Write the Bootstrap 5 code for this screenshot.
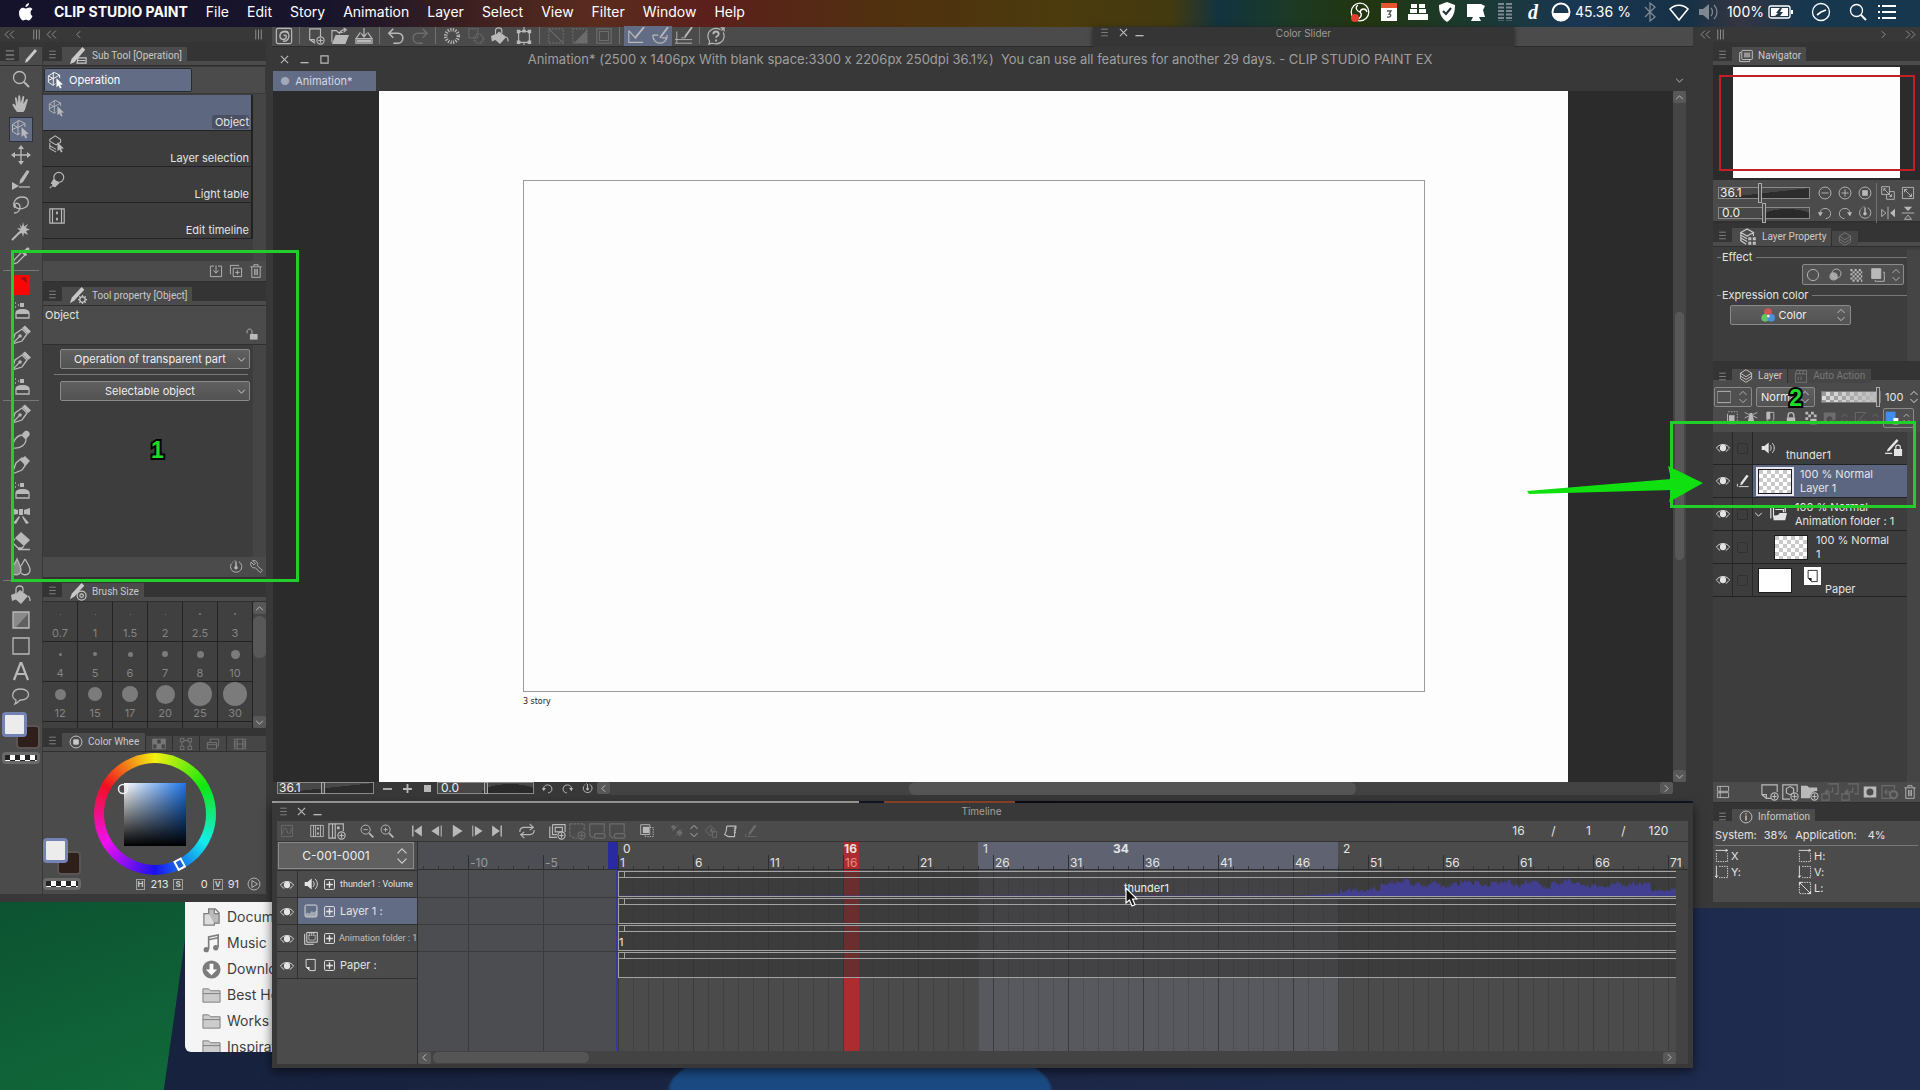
<!DOCTYPE html>
<html lang="en">
<head>
<meta charset="utf-8">
<meta name="viewport" content="width=device-width, initial-scale=1">
<title>CLIP STUDIO PAINT</title>
<link href="https://cdn.jsdelivr.net/npm/bootstrap@5.3.0/dist/css/bootstrap.min.css" rel="stylesheet">
<style>
:root{--face:#4b4b4b;--frame:#383838;--well:#3d3d3d;--deep:#2b2b2b;--sel:#636c85;--ink:#e4e4e4;--glyph:#b9b9b9;--edge:#2f2f2f}
body{min-height:100vh;font-family:Inter,"Liberation Sans",sans-serif;font-feature-settings:"calt" 0;font-size:11px;line-height:14px;color:var(--ink);background:#1f2b4e;overflow:hidden}
.desk{min-height:100vh;background:
 radial-gradient(ellipse 210px 60px at 860px 100%,#1b4a82 90%,transparent 92%),
 linear-gradient(90deg,#16213c,#1c2747 50%,#1f2c50)}
.turf{left:0;bottom:0;width:195px;height:230px;background:linear-gradient(160deg,#0b4f30,#116a3a);clip-path:polygon(0 0,100% 0,94% 40%,84% 100%,0 100%)}
svg.i{width:18px;height:18px;fill:none;stroke:currentColor;stroke-width:1.3;flex:none;display:block}
svg.s{width:14px;height:14px}
svg.xs{width:11px;height:11px;stroke-width:1.8}
.f{fill:currentColor;stroke:none}
.ib{display:flex;align-items:center;justify-content:center;padding:0;border:0;border-radius:0;color:var(--glyph);background:none;width:20px;height:20px;flex:none}
.ib:hover{color:#fff}
.off{color:#6c6c6c}
/* menu bar */
.menus{height:27px;padding-bottom:4px;background:linear-gradient(90deg,#15132b 0,#17142b 17%,#3a1f20 24%,#5a2c1e 31%,#5c1f1c 37%,#50300f 46%,#4c3b0d 55%,#433a10 61%,#12333f 63.5%,#1b3a26 67%,#22350f 71%,#1c3a2c 76%,#193653 82%,#163145 88%,#353541 90.5%,#17374f 94%,#17374f 100%);font-size:14px;line-height:20px;color:#fff}
.menus a{color:#fff;text-decoration:none}
.menus .ib{color:#fff;width:auto}
.menus svg.i{width:20px;height:20px}
.menus .off{color:#7f8890}
.menus svg.batt{width:26px}
.menu-items{gap:18px;margin-left:14px}
.status-items{gap:9px;padding-right:23px}
.dd{font-family:"Liberation Serif",serif;font-size:20px;padding:0 4px}
/* docks */
.dock{background:var(--frame);position:relative;z-index:2}
.ldock{width:272px;margin-bottom:188px;padding-bottom:8px}
.rdock{width:227px;margin-bottom:182px;padding-bottom:6px;padding-left:20px}
.strip{height:15px;color:#8e8e8e}
.rstrip{margin-left:-13px}
.tabs{height:24px;padding-top:5px;flex:none;background:linear-gradient(#343434 19px,var(--face) 19px,var(--face) 23px,var(--edge) 23px)}
.burger.ib{width:19px;height:15px;color:#7e7e7e}
.ptab{height:18px;padding:0 5px 0 7px;gap:5px;background:var(--face);border:0;color:#c9c9c9;font-family:Roboto,"Liberation Sans",sans-serif;font-size:10px;line-height:18px;white-space:nowrap;overflow:hidden;display:flex;align-items:center}
.ptab.idle{color:#777;border-left:1px solid var(--edge);background:#464646;padding:0 6px;height:15px;align-self:flex-end;margin-bottom:1px}
.foot{height:21px;flex:none;background:var(--face);border-bottom:1px solid var(--edge)}
.well{background:var(--well)}
.gutter{width:13px;background:#454545;flex:none}
/* tool strip */
.tools{width:42px;background:var(--face);padding-bottom:185px;position:relative}
.tools .ib{flex:1 1 0;width:24px;height:auto;margin:0 auto 0 9px}
.tools .burger.ib{flex:none;width:19px;height:15px;margin:0}
.tools .ib.on{background:var(--sel);outline:1px solid #2c3140;outline-offset:-1px}
.tools hr,.rule{margin:1px 3px;border:0;border-top:1px solid #777;opacity:1}
.tools svg.i{width:20px;height:20px}
.tools .tabs svg.i{width:14px;height:14px}
.swatch{width:38px;height:52px;position:relative;flex:none}
.swatch i{position:absolute;border-radius:4px;box-sizing:border-box}
.swatch .fg{left:0;top:0;width:25px;height:25px;background:#ececec;border:3px solid #7482b4;z-index:1}
.swatch .bgc{right:0;top:13px;width:24px;height:24px;background:#2f1f1b;border:2px solid #5a5553}
.swatch .tr{left:0;bottom:0;width:38px;height:12px;border:3px solid #6a6a6a;background:conic-gradient(#fff 25%,#222 0 50%,#fff 0 75%,#222 0) 0 0/10px 10px}
.toolsw{margin:3px auto -55px 2px}
.lpanels{width:223px;margin-left:1px}
.group{height:28px;background:var(--face);border:1px solid #3a3a3a;padding-top:1px}
.group button{width:148px;height:24px;background:var(--sel);border:1px solid #262a33;border-radius:2px;color:#fff;gap:4px;padding:0 2px}
.sublist{padding:1px 0 22px}
.sub{height:36px;border:0;border-bottom:1px solid #222;border-right:2px solid #222;background:var(--well);color:var(--ink);padding:4px 2px 1px 5px}
.sub.on{background:#5d6780}
.sub.on .lbl{background:#4a5062;border-radius:3px;padding-left:3px}
.sub svg{color:var(--glyph)}
.prophead{height:39px;flex:none;background:var(--face);border-bottom:1px solid var(--edge);padding:2px 4px 0 2px}
.propset{padding:4px 3px 0 17px}
.propset .rule{margin:5px 2px 6px -6px}
.drop{background:linear-gradient(#606060,#525252);border:1px solid #8a8a8a;border-radius:2px;color:#eee;font-size:11px;height:20px;padding:0 16px 0 6px;text-align:center;text-align-last:center;appearance:none;width:100%}
.dropwrap{display:grid;align-items:center}
.dropwrap>*{grid-area:1/1}
.dropwrap svg{justify-self:end;margin-right:3px;color:#ccc;pointer-events:none}
.sizes{height:126px;overflow:hidden}
.sizegrid{display:grid;grid-template-columns:repeat(6,1fr);grid-auto-rows:40px;background:#404040}
.sizegrid button{border:0;border-right:1px solid #222;border-bottom:1px solid #222;background:none;color:#858585;padding:0 0 1px;font-size:11px;line-height:14px;display:flex;flex-direction:column;align-items:center;justify-content:flex-end}
.sizegrid i{display:block;border-radius:50%;background:#7b7b7b;flex:none}
.sizegrid u{flex:none;height:24px;display:flex;align-items:center;text-decoration:none}
.sizegrid b{font-weight:400;z-index:1}
.sbtn.ib{width:13px;height:12px;background:#585858;color:#bbb;border-radius:2px}
.thumb{background:#606060;border-radius:6px}
.sthumb{height:42px;margin-top:2px;background:#585858}
.cwt{width:83px}
.colorbody{height:142px;background:var(--face);padding-top:1px}
.wheel{width:122px;height:122px;flex:none;border-radius:50%;background:conic-gradient(#f4f010,#0fe80f 60deg,#14ecec 120deg,#1a10ee 180deg,#f010f0 240deg,#f01020 300deg,#f4f010)}
.wheel .core{width:102px;height:102px;border-radius:50%;background:var(--face)}
.wheel .sq{width:62px;height:63px;background:linear-gradient(transparent,#000),linear-gradient(90deg,#fff,#1c74e8)}
.knobs{left:0;top:0}
.hsv{margin-top:-1px;gap:5px;font-size:11px;padding-right:2px}
.hsv b{font-size:8px;font-weight:700;line-height:9px;border:1px solid #a0a0a0;color:#ccc;padding:0 1px}
.hsv .n0{width:20px;text-align:right}
.cwsw{left:0;top:86px}
/* centre */
.mid{z-index:3;min-width:0}
.bar{height:20px;padding-bottom:2px;background:var(--face);border-bottom:1px solid #2c2c2c}
.bar .ib{width:24px}
.sep{width:1px;background:#717171;margin:0 4px 0 3px;align-self:stretch;flex:none}
.bar .on{background:var(--sel)}
.docwin,.tlwin{background:var(--frame)}
.floatwin{width:421px;height:20px;padding-bottom:9px;align-self:flex-start;background:#353535;color:#9b9b9b;margin-right:179px;box-shadow:0 1px 5px #222;font-size:10px}
.bar .burger.ib{width:22px}
.fwt{padding-right:54px}
.wi.i{width:9px;height:9px;stroke-width:2.6}
.wbtn.ib{width:16px;height:11px}
.wb2.ib{width:18px;height:18px;margin-left:2px}
.title{height:24px;color:#9f9f9f;font-size:13px;line-height:24px;padding-left:1px}
.doctitle{padding-right:66px}
.doctabs{height:20px;padding:0 5px 0 1px}
.doctab{width:103px;height:20px;background:var(--sel);color:#d4d8e4;border:0;text-align:left;padding:0 7px}
.dot{color:#a3a9bb;margin-right:2px}
.docmain{padding:0 7px 0 1px}
.stage{background:var(--deep);padding-left:7.5%;padding-right:7.4%}
.paper{background:#fdfdfd;padding:89px 12.1% 70px}
.frameline{border:1px solid #999ba0}
.note{font:8px/20px "DejaVu Sans","Liberation Sans",sans-serif;color:#222;height:20px}
.vth{height:248px;margin-top:209px;width:9px;align-self:center;background:#585858}
.docfoot{height:19px;padding:0 20px 7px 5px}
.docfoot .ib{height:12px}
.gauge{display:grid;align-items:center;height:12px}
.gauge>*{grid-area:1/1}
.gauge span{pointer-events:none;z-index:1;font-size:12px;line-height:12px;padding-left:2px;color:#eee}
.gauge input,.opac{appearance:none;height:12px;width:100%;margin:0;border:1px solid #8a8a8a;background:linear-gradient(to bottom right,#484848 50%,#2d2d2d 51%)}
.gauge.hill input{background:radial-gradient(ellipse 30% 90% at 76% 100%,#2a2a2a 98%,transparent),#474747}
.gauge input::-webkit-slider-thumb,.opac::-webkit-slider-thumb{appearance:none;width:4px;height:20px;background:#4b4b4b;border:1px solid #aaa;border-radius:0}
.gauge.low input::-webkit-slider-thumb{height:12px}
.g97{width:97px;margin-right:3px}
.dth{margin-left:28.5%;width:42.5%;background:#555}
.edgeline{height:2px;background:linear-gradient(90deg,#a9a9a9 41.3%,#141726 41.3%,#141726 43.1%,#9a4a2c 43.1%,#9a4a2c 52.3%,#0d0e14 52.3%,#11152a)}
/* timeline */
.tlwin{height:265px;margin-bottom:22px;padding:0 5px 4px 5px;box-shadow:0 3px 10px #0009}
.tltitle{height:18px;color:#a0a0a0;font-size:10px;padding-bottom:2px;margin-left:-3px}
.tlt{padding-right:50px}
.tlbar{height:21px;background:var(--face);border-bottom:1px solid #333}
.tlbar i{width:10px}
.nw.ib{width:14px}
.counts{font-size:12px;padding-right:12px}
.counts span{width:35px;text-align:center}
.tlmain{background:#434343;min-width:0}
.tlleft{width:141px;background:var(--face);border-right:1px solid #303030}
.cut{height:27px;width:137px;padding-left:1px}
.cut select{height:27px;background:#606060;padding-right:26px;font-size:12px;border-radius:0}
.trk{height:27px;border-top:1px solid #303030;white-space:nowrap;overflow:hidden}
.trk .eye{width:21px;height:27px;border-right:1px solid #303030;flex:none}
.trk.on .nm{background:var(--sel)}
.trk .nm{padding-left:6px;gap:6px;min-width:0}
.trk .nm span{margin-left:-1px}
.trk .nm .sm{font:9px/14px Roboto,"Liberation Sans",sans-serif}
.trk .nm .fadeout{opacity:.75;margin-left:-2px}
.lastt{border-bottom:1px solid #303030;height:28px}
.tlleft .first{margin-top:1px}
.tlright{min-width:0;overflow:hidden;background:#434343}
.ruler{height:28px;flex:none;overflow:hidden;border-bottom:1px solid #2e2e2e;background:
 linear-gradient(#2929a2,#2929a2) 190px 0/10px 100% no-repeat,
 linear-gradient(#ab2d2f,#ab2d2f) 426px 0/15px 100% no-repeat,
 repeating-linear-gradient(90deg,#2f2f2f 0 1px,transparent 1px 75px) 50px 13px/100% 14px no-repeat,
 repeating-linear-gradient(90deg,#333 0 1px,transparent 1px 15px) 5px 24px/100% 4px no-repeat,
 linear-gradient(90deg,#4d4e53 200px,var(--face) 200px,var(--face) 560px,#5f6371 560px,#5f6371 920px,var(--face) 920px)}
.ruler .sec{padding-left:205px;height:14px;font-size:12px}
.ruler .sec span{width:360px;flex:none;position:relative}
.ruler .fr{padding-left:51px;height:14px;font-size:12px}
.ruler .fr span{width:75px;flex:none;padding-left:1px}
.ruler .neg{color:#999}
.ruler .cur{color:#e58a8a}
.ruler em{position:absolute;font-style:normal;font-weight:700;top:0}
.pos16{left:221px}
.pos34{left:130px}
.lanes{margin-right:12px;background:
 linear-gradient(#ab2d2f,#ab2d2f) 426px 0/15px 100% no-repeat,
 linear-gradient(#3a35a0,#3a35a0) 198px 0/2px 100% no-repeat,
 repeating-linear-gradient(90deg,#3a3b3d 0 1px,transparent 1px 75px) 50px 0/100% 100% no-repeat,
 repeating-linear-gradient(90deg,#0002 0 1px,transparent 1px 15px) 200px 0/100% 100% no-repeat,
 linear-gradient(90deg,#4c4d50 200px,var(--face) 200px,var(--face) 560px,#58595f 560px,#58595f 920px,var(--face) 920px)}
.lane{height:27px;border-top:1px solid #3b3b3b;padding-left:200px}
.lane:first-child{border-top-color:transparent}
.clip{height:26px;border:1px solid #a3a3a3;border-right:0;background:#2d2d2d80;color:#eee;position:relative}
.clip::before{content:"";display:block;height:6px;border-bottom:1px solid #a3a3a3;background:linear-gradient(90deg,transparent 5px,#a3a3a3 5px,#a3a3a3 6px,transparent 6px)}
.clip svg{display:block;position:absolute;right:0;bottom:0;width:100%;height:18px}
.clip .tag{position:absolute;left:505px;top:9px}
.one{left:0;top:9px}
.hsb{height:13px;background:#434343}
.tth{width:156px;height:11px;margin-left:2px;background:#555}
.tlr{margin-right:12px}
/* right */
.nav{height:114px;flex:none;background:var(--deep);padding:1px 20px 2px}
.nav .pg{background:#fdfdfd}
.nav .view{left:6px;right:5px;top:9px;bottom:9px;border:2px solid #c22026}
.navctl{height:43px;background:var(--face);border-bottom:2px solid #303030;padding:3px 0 0 5px}
.navctl .gauge{width:92px;margin-right:5px;flex:none}
.navctl .sep{margin:0 1px}
.lprop{height:114px;padding-top:3px}
.legend{display:flex;align-items:center;gap:4px;line-height:14px;padding-left:4px}
.legend::before{content:"";width:4px;margin-right:-3px;border-top:1px solid #777}
.legend::after{content:"";flex:1;border-top:1px solid #777}
.boxed{border:1px solid #8a8a8a;border-radius:2px;background:#505050}
.fx{width:102px;height:21px;margin:0 3px 3px}
.exprs{width:121px;margin:3px 0 0 17px}
.exprs svg.rgbi{justify-self:start;margin-left:31px}
.exprs select{padding-left:20px}
.ltabs{height:22px;background:linear-gradient(#343434 19px,var(--face) 19px);padding-top:8px}
.ltabs .ptab{height:14px}
.ltabs .ptab.idle{margin-bottom:0}
.itabs{height:22px;padding-top:6px;background:linear-gradient(#343434 18px,var(--face) 18px)}
.itabs .ptab{height:16px}
.layctl{height:49px;background:var(--face)}
.lc1{height:24px;padding:3px 2px 0 1px;gap:4px}
.b1.ib{width:38px;gap:5px}
.blend{width:59px;flex:none}
.blend .drop{text-align:left;text-align-last:left;padding-left:4px}
.opac{background:linear-gradient(90deg,transparent,#bbb),conic-gradient(#ddd 25%,#999 0 50%,#ddd 0 75%,#999 0) 0 0/8px 8px;border-color:#777;width:60px;flex:none;margin-left:2px}
.hund{font-size:11px}
.lc2{padding-left:8px;height:20px;margin-top:1px}
.lc2 .wd.ib{width:31px;gap:2px}
.lrow{height:33px;border-bottom:1px solid #232323;line-height:14px;white-space:nowrap}
.lrow .c{width:20px;border-right:1px solid #272727;height:32px;display:flex;align-items:center;justify-content:center;flex:none}
.lrow .box{width:11px;height:11px;border:1px solid #303030;border-radius:2px}
.lrow.on .body{background:#5c6680}
.lrow .body{min-width:0}
.checker{width:34px;height:25px;border:1px solid #1c1c1c;background:conic-gradient(#fff 25%,#c9c9c9 0 50%,#fff 0 75%,#c9c9c9 0) 0 0/8px 8px;flex:none}
.checker.plain{background:#fff}
.lrow.on .checker{outline:2px solid #e8e8f4}
.tname{margin-left:11px;padding-bottom:2px}
.t1{margin-left:5px}
.t2{margin-left:21px}
.tx{margin-left:8px}
.dnn{margin:0 5px 0 0}
.pgico{background:#fff;color:#222;margin-left:12px;width:17px;height:18px;padding:2px;align-self:flex-start;margin-top:3px}
.info{height:77px;background:var(--face);padding:3px 2px 0;font-size:11px}
.sysline{display:flex;gap:7px}
.sysline span:last-child{margin-left:4px}
.info .rule{margin:3px 0 2px}
.coords{display:grid;grid-template-columns:83px 1fr;grid-auto-rows:16px}
.coords span{display:flex;gap:2px;align-items:center}
/* finder */
.finder{left:185px;bottom:38px;width:140px;height:160px;background:#f5f5f5;border-radius:0 0 6px 6px;z-index:1;overflow:hidden;color:#3f3f3f;font-size:14px;line-height:26px;padding:12px 0 0 17px}
.finder a{color:inherit;text-decoration:none;gap:6px;height:26px;white-space:nowrap}
.finder svg.i{color:#7c7c7c;width:19px;height:19px}
/* callouts */
.callbox{border:3px solid #22cf28;z-index:9;pointer-events:none}
.m1{left:11px;top:250px;width:288px;height:332px}
.m2{right:4px;top:421px;width:246px;height:87px}
.arr{right:217px;top:466px;width:176px;height:38px;z-index:9}
.num{z-index:9;font:700 23px/26px "Liberation Sans",sans-serif;color:#1fdc28;-webkit-text-stroke:4px #000;paint-order:stroke fill}
.n1{left:151px;top:437px}
.n2{right:118px;top:385px}
.cursor{left:1125px;top:887px;width:13px;height:20px;z-index:9}
</style>
</head>
<body>
<svg width="0" height="0" class="position-absolute" aria-hidden="true"><defs>
<symbol id="burger" viewBox="0 0 20 20"><path d="M4 4h12M4 10h12M4 16h12"/></symbol>
<symbol id="x" viewBox="0 0 20 20"><path d="M2 2l16 16M18 2L2 18"/></symbol>
<symbol id="min" viewBox="0 0 20 20"><path d="M1 17h18" stroke-width="3"/></symbol>
<symbol id="sqr" viewBox="0 0 20 20"><path d="M2 2h16v16H2z"/></symbol>
<symbol id="up" viewBox="0 0 20 20"><path d="M4 13l6-6 6 6"/></symbol>
<symbol id="dn" viewBox="0 0 20 20"><path d="M4 7l6 6 6-6"/></symbol>
<symbol id="lt" viewBox="0 0 20 20"><path d="M13 4l-6 6 6 6"/></symbol>
<symbol id="rt" viewBox="0 0 20 20"><path d="M7 4l6 6-6 6"/></symbol>
<symbol id="ltt" viewBox="0 0 20 20"><path d="M9 3L2 10l7 7M18 3l-7 7 7 7"/></symbol>
<symbol id="rtt" viewBox="0 0 20 20"><path d="M2 3l7 7-7 7M11 3l7 7-7 7"/></symbol>
<symbol id="grip" viewBox="0 0 20 20"><path d="M5 1v18M10 1v18M15 1v18"/></symbol>
<symbol id="ud" viewBox="0 0 20 20"><path d="M5 7l5-5 5 5M5 13l5 5 5-5"/></symbol>
<symbol id="apple" viewBox="0 0 20 20"><path class="f" d="M13 1c.2 2-1.600 4-3.500 4C9.300 3 11.200 1.200 13 1zM16.500 14c-.8 2-2.200 4.500-3.900 4.500-1.100 0-1.500-.7-2.700-.7s-1.700.7-2.700.7C5.200 18.500 3 14.500 3 11c0-3.300 2-5.300 4.200-5.300 1.200 0 2 .8 3 .8s1.800-.9 3.300-.9c1.200 0 2.300.6 3 1.600-2.700 1.600-2.300 5.500 0 6.800z"/></symbol>
<symbol id="mag" viewBox="0 0 20 20"><circle cx="8.500" cy="8.500" r="6"/><path d="M13 13l5 5" stroke-width="2"/></symbol>
<symbol id="hand" viewBox="0 0 20 20"><path class="f" d="M6 18C4 15 1 11 1.500 10c1-.8 2.500.5 3.500 2L4 4.500C4 3 5.500 3 5.800 4.300L7 9l.3-6.800c.1-1.400 1.700-1.400 1.900 0L9.700 9l1.800-6.200c.5-1.300 1.900-.9 1.700.5L12.300 10l2.800-4.500c.8-1 2-.4 1.600.9L14.800 13c-.5 2-1 3.500-2.300 5z"/></symbol>
<symbol id="cube" viewBox="0 0 20 20"><path d="M9 14l-2 2-5.500-3.500v-7L8 1.500l6 3V8M1.500 5.500L7 8.500l7-4M7 8.500v7M7 1.500v7M1.500 10.500L7 8" stroke-width="1"/><path class="f" d="M10.500 8v10l2.300-2 1.700 3.500 1.700-.8-1.700-3.400 3.200-.3z"/></symbol>
<symbol id="move" viewBox="0 0 20 20"><path d="M10 3v14M3 10h14"/><path class="f" d="M10 0l3 4H7zM10 20l3-4H7zM0 10l4-3v6zM20 10l-4-3v6z"/></symbol>
<symbol id="mvl" viewBox="0 0 20 20"><path class="f" d="M16 0l2.500 1.500L12 12l-3.500 2 .5-4zM1 12l7 4-7 4z"/><path d="M8 17h11"/></symbol>
<symbol id="lasso" viewBox="0 0 20 20"><path d="M4 13C1 9 4 2 11 2c8 0 8 9 2 11-5 2-9 0-9-3s5-2 5 2-3 6-6 6"/></symbol>
<symbol id="wand" viewBox="0 0 20 20"><path d="M1 19l9-9" stroke-width="2"/><path class="f" d="M12 1l1.200 4.500L17 3l-2.200 4L19 8.500 15 10l2 4-4-2-1 4-1-4-4 1 2.500-3L6 7l4 .5L8.500 3 11 6z"/></symbol>
<symbol id="drop" viewBox="0 0 20 20"><path d="M2 18l1-4 8-8 3 3-8 8z"/><path class="f" d="M10 5l1.200-1.200 1.300 1.300L15.500 2c2-1.500 4 .8 2.500 2.500L15 7.500l1.200 1.200L15 10z"/></symbol>
<symbol id="red" viewBox="0 0 20 20"><path d="M1 0h18v20H1z" fill="#fb0506" stroke="none"/><path d="M9 3l7 5-1-6z" fill="#a01010" stroke="none"/></symbol>
<symbol id="air" viewBox="0 0 20 20"><path d="M5 18v-5c0-4 13-4 13 0v5z"/><path class="f" d="M5 14v-2c1-4 12-4 13 0v2zM9 3h4v4H9z"/><path d="M1 2h1M4 3h1M1 6h1M4 7h1M7 5h1" stroke-width="1.500"/></symbol>
<symbol id="pen" viewBox="0 0 20 20"><path d="M1 19L4 9l7-5 5 5-5 7zM1 19l7-7"/><circle class="f" cx="9" cy="11" r="1.800"/><path class="f" d="M11 3l3-2.500 6 6L17 9z"/></symbol>
<symbol id="brush" viewBox="0 0 20 20"><path d="M2 18C1 12 5 6 11 5l4 4c0 6-6 10-13 9z"/><path class="f" d="M11 4l3-3c3-1 6 2 4 5l-3 3z"/></symbol>
<symbol id="pencil" viewBox="0 0 20 20"><path d="M1 19l4-11 6-5 5 5-5 7z"/><path class="f" d="M9 5l5-4 5 5-5 5-2-3z"/></symbol>
<symbol id="bow" viewBox="0 0 20 20"><path class="f" d="M8 3h4v6H8zM7 4L1 2v7l6-1zM13 4l6-2v7l-6-1zM8 10L2 17l3 1 4-7zM12 10l6 7-3 1-4-7z"/></symbol>
<symbol id="eraser" viewBox="0 0 20 20"><path class="f" d="M10 1l9 8-6 6-9-8z"/><path d="M4 8l-3 3 6 6h4l2-2M7 18.500h12"/></symbol>
<symbol id="blend" viewBox="0 0 20 20"><path d="M6 2c-2 5-5 7-5 11 0 7 9 6 9 0 0-4-2-6-4-11z" fill="#8a8a8a"/><path d="M14 2c2 4 5 7 5 11 0 5-6 6-9 3M14 2l-4 7"/></symbol>
<symbol id="bucket" viewBox="0 0 20 20"><path class="f" d="M9 5l8 6-7 8-8-7z"/><path d="M5 9V4c0-4 7-4 7 0v3M17 11c2 1 2 3 2 5"/><path class="f" d="M0 10l5-2 1 6-5 2z"/></symbol>
<symbol id="grad" viewBox="0 0 20 20"><path d="M2 2h16v16H2z" fill="#8a8a8a"/><path d="M17 4v13H5z" fill="#606060" stroke="none"/></symbol>
<symbol id="rect" viewBox="0 0 20 20"><path d="M2 2h16v16H2z"/></symbol>
<symbol id="txt" viewBox="0 0 20 20"><path d="M3 19L9.500 2h1L17 19M6 13h8.500" stroke-width="2.200"/></symbol>
<symbol id="balloon" viewBox="0 0 20 20"><path d="M5 14C0 12 0 3 10 3s10 11 0 11c-2 0-2 2-6 4 1-2 1-3 1-4z"/></symbol>
<symbol id="penlist" viewBox="0 0 20 20"><path class="f" d="M15 0l3 3L6 17l-5 2 2-6z"/><path d="M10 12h9v6H9zM10 15h8"/></symbol>
<symbol id="pengear" viewBox="0 0 20 20"><path class="f" d="M14 0l3 3L6 15l-5 3 2-6z"/><circle cx="15" cy="14" r="3"/><path d="M15 9v2M15 17v2M10 14h2M18 14h2M11.500 10.500l1.500 1.500M17 16l1.500 1.500M18.500 10.500L17 12M13 16l-1.500 1.500"/></symbol>
<symbol id="pendisc" viewBox="0 0 20 20"><path class="f" d="M14 0l3 3L6 15l-5 3 2-6z"/><circle cx="14" cy="14" r="5"/><circle cx="14" cy="14" r="2"/></symbol>
<symbol id="laysel" viewBox="0 0 20 20"><path d="M2 5l6-4 6 4v3l-5 3-7-4zM2 9v3l7 4M2 12v3l7 4" stroke-width="1.200"/><path class="f" d="M10.500 8v10l2.300-2 1.700 3.500 1.700-.8-1.700-3.400 3.200-.3z"/></symbol>
<symbol id="bulb" viewBox="0 0 20 20"><circle cx="12" cy="7" r="5.500"/><path class="f" d="M6 9l7 4-5 5-4-1 1-2-2-1z"/><path d="M2 19l2-2"/></symbol>
<symbol id="edtl" viewBox="0 0 20 20"><path d="M2 2h16v16H2zM5 2v16M15 2v16"/><path class="f" d="M9 5h2v3H9zM9 12h2v3H9z"/></symbol>
<symbol id="imp" viewBox="0 0 20 20"><path d="M7 3H2v15h16V3h-5M10 2v11M6 9l4 4 4-4"/></symbol>
<symbol id="dup" viewBox="0 0 20 20"><path d="M6 6h12v12H6zM3 14H2V2h12v1M12 9v6M9 12h6"/></symbol>
<symbol id="trash" viewBox="0 0 20 20"><path d="M2 4h16M7 3V1h6v2M4 4v15h12V4M8 7v9M10 7v9M12 7v9"/></symbol>
<symbol id="lock" viewBox="0 0 20 20"><path class="f" d="M7 10h11v8H7z"/><path d="M10 10V6c0-4-7-4-7 0v3"/></symbol>
<symbol id="lockc" viewBox="0 0 20 20"><path class="f" d="M4 9h12v9H4z"/><path d="M6 9V6c0-5 8-5 8 0v3" stroke-width="2"/></symbol>
<symbol id="penlock" viewBox="0 0 20 20"><path class="f" d="M13 0l2 2L5 13l-3 1 1-3zM10 11h9v8h-9z"/><path d="M12 11V9c0-3 5-3 5 0v2M0 16h8"/></symbol>
<symbol id="rst" viewBox="0 0 20 20"><path d="M14 2.500c6 3.500 5 10.500 1 13.500-4 2.500-9 1.500-11.500-2C1.500 10.500 2 7 4 5" /><path d="M10 2v8M5 3h1M8 1h1" stroke-width="2"/><circle class="f" cx="10" cy="11" r="2.500"/></symbol>
<symbol id="wrench" viewBox="0 0 20 20"><path d="M3 3l4 4 2-2-4-4c6-1 8 3 7 7l7 7-3 3-7-7c-4 1-8-2-6-8z"/></symbol>
<symbol id="cring" viewBox="0 0 20 20"><circle cx="10" cy="10" r="8.500"/><rect class="f" x="6" y="6" width="8" height="8" rx="2"/></symbol>
<symbol id="pal" viewBox="0 0 20 20"><path d="M1 3h18v14H1zM1 10h18M7 3v14M13 3v14"/><path class="f" d="M1 3h6v7H1zM13 3h6v7h-6zM7 10h6v7H7z"/></symbol>
<symbol id="node" viewBox="0 0 20 20"><path d="M2 2h5v5H2zM13 2h5v5h-5zM7 5h6M4 7v6M16 7v6M2 13h5v5H2zM13 13h5v5h-5z"/></symbol>
<symbol id="wins" viewBox="0 0 20 20"><path d="M2 8h13v9H2zM6 8V3h12v10h-3M2 11h13"/></symbol>
<symbol id="film" viewBox="0 0 20 20"><path d="M2 3h16v14H2zM6 3v14M14 3v14M2 7h4M2 10h4M2 13h4M14 7h4M14 10h4M14 13h4M6 10h8"/></symbol>
<symbol id="play" viewBox="0 0 20 20"><circle cx="10" cy="10" r="8.500"/><path d="M7 5l8 5-8 5z"/></symbol>
<symbol id="csp" viewBox="0 0 20 20"><rect x="1.500" y="1.500" width="17" height="17" rx="2"/><path d="M10 10c1-2 4 0 2 2.500S5 14 5.500 9.500 13 4 15 7.500 14 16 9 16M15 7c-1-3-6-3-9 0" stroke-width="1.500"/></symbol>
<symbol id="new" viewBox="0 0 20 20"><path d="M9 18L3 14V2h12v9M3 14h5v4"/><circle cx="15" cy="15" r="4"/><path d="M15 12.500v5M12.500 15h5"/></symbol>
<symbol id="open" viewBox="0 0 20 20"><path d="M1 17V4h5l2 2h5"/><path class="f" d="M5 9h15l-4 10H1z"/><path d="M9 8c1-4 4-5 8-5M14 1l3 2-3 3"/></symbol>
<symbol id="save" viewBox="0 0 20 20"><path d="M6 6L1 13v5h18v-5l-5-7M10 1v9M7 7l3 4 3-4M1 13h18"/><path class="f" d="M2 14h16v3H2z"/></symbol>
<symbol id="undo" viewBox="0 0 20 20"><path d="M7 2L2 7l5 5M2 7h10c8 0 7 11 0 11H7" stroke-width="1.700"/></symbol>
<symbol id="redo" viewBox="0 0 20 20"><path d="M13 2l5 5-5 5M18 7H8c-8 0-7 11 0 11h5" stroke-width="1.700"/></symbol>
<symbol id="burst" viewBox="0 0 20 20"><circle cx="10" cy="10" r="7" stroke-width="4" stroke-dasharray="1.300 1.450"/></symbol>
<symbol id="dsel" viewBox="0 0 20 20"><path d="M2 2h10v10H2z" stroke-dasharray="2 1"/><circle cx="13" cy="13" r="5" stroke-width="2.500" stroke-dasharray="1 1.500"/></symbol>
<symbol id="trans" viewBox="0 0 20 20"><path d="M4 5h12v12H4zM10 0v5M10 17v3"/><path class="f" d="M2 3h4v4H2zM14 3h4v4h-4zM2 15h4v4H2zM14 15h4v4h-4zM8 3h4v3H8z"/></symbol>
<symbol id="ds1" viewBox="0 0 20 20"><path d="M2 2h16v16H2z" stroke-dasharray="2 1.500"/><path d="M2 2l16 16"/></symbol>
<symbol id="ds2" viewBox="0 0 20 20"><path d="M2 2h16v16H2z" stroke-dasharray="2 1.500"/><path class="f" d="M18 3v15H3z"/></symbol>
<symbol id="ds3" viewBox="0 0 20 20"><path d="M2 2h16v16H2zM5 5h10v10H5z"/></symbol>
<symbol id="sn1" viewBox="0 0 20 20"><path d="M19 0L9 12" stroke-width="2"/><path d="M2 4v13h16M2 4l8 9"/></symbol>
<symbol id="sn2" viewBox="0 0 20 20"><path d="M19 0l-9 12" stroke-width="2"/><path d="M2 9c0 12 16 12 16 0M2 9h6M12 12h6"/></symbol>
<symbol id="sn3" viewBox="0 0 20 20"><path d="M19 0l-8 11" stroke-width="2"/><path d="M2 5v13M0 14h19M0 18h19M7 12h5" stroke-width="1"/></symbol>
<symbol id="help" viewBox="0 0 20 20"><path d="M15 3C8-1 1 4 1 10c0 3 1 5 2 6l-1 3 4-1c6 2 13-1 13-8 0-1 0-3-1-4M15 1h4v4M19 1l-3 3"/><path d="M7 8c0-4 6-4 6 0 0 2-3 2-3 4M10 14v2" stroke-width="2"/></symbol>
<symbol id="wave" viewBox="0 0 20 20"><path d="M2 2h16v16H2zM4 14c0-10 5-10 6-4s6 5 6-4"/></symbol>
<symbol id="tl1" viewBox="0 0 20 20"><path d="M1 2h18v16H1zM5 2v16M8 2v16M15 2v16"/><path class="f" d="M10 5h3v3h-3zM10 12h3v3h-3z"/></symbol>
<symbol id="tl2" viewBox="0 0 20 20"><path d="M9 18H1V2h16v8M5 2v16M8 2v16"/><path class="f" d="M10 5h3v3h-3z"/><circle cx="15" cy="15" r="4"/><path d="M15 12.500v5M12.500 15h5"/></symbol>
<symbol id="zo" viewBox="0 0 20 20"><circle cx="8" cy="8" r="6.500"/><path d="M13 13l6 6" stroke-width="2.500"/><path d="M5 8h6"/></symbol>
<symbol id="zi" viewBox="0 0 20 20"><circle cx="8" cy="8" r="6.500"/><path d="M13 13l6 6" stroke-width="2.500"/><path d="M5 8h6M8 5v6"/></symbol>
<symbol id="p1" viewBox="0 0 20 20"><path class="f" d="M17 2v16L6 10z"/><path d="M4 2v16" stroke-width="2"/></symbol>
<symbol id="p2" viewBox="0 0 20 20"><path class="f" d="M13 3v14L2 10z"/><path d="M16 2v16" stroke-width="1.500"/></symbol>
<symbol id="p3" viewBox="0 0 20 20"><path class="f" d="M4 1v18l14-9z"/></symbol>
<symbol id="p4" viewBox="0 0 20 20"><path class="f" d="M7 3v14l11-7z"/><path d="M4 2v16" stroke-width="1.500"/></symbol>
<symbol id="p5" viewBox="0 0 20 20"><path class="f" d="M3 2v16l11-8z"/><path d="M16 2v16" stroke-width="2"/></symbol>
<symbol id="loop" viewBox="0 0 20 20"><path d="M2 11c0-4 2-5 5-5h9M13 2l4 4-4 3M18 9c0 4-2 5-5 5H4M7 11l-4 3 4 4"/></symbol>
<symbol id="cel" viewBox="0 0 20 20"><path d="M10 17H2V5M5 3h14v8M5 3v11h5"/><path d="M8 6h8v5H8z"/><circle cx="15" cy="15" r="4"/><path d="M15 12.500v5M12.500 15h5"/></symbol>
<symbol id="cel2" viewBox="0 0 20 20"><path d="M2 2h16v8M2 2v13l5 3h3" stroke-dasharray="3 1"/><circle cx="15" cy="15" r="4"/><path d="M15 12.500v5M12.500 15h5"/></symbol>
<symbol id="cel3" viewBox="0 0 20 20"><path d="M2 2h16v10M2 2v13l4 3"/><rect x="7" y="13" width="12" height="5" rx="2.500"/></symbol>
<symbol id="onion" viewBox="0 0 20 20"><path d="M7 5h12v13H7z" stroke-dasharray="2 1.500"/><path d="M1 1h13v14H1z"/><path class="f" d="M4 4h9v9H4z"/></symbol>
<symbol id="key" viewBox="0 0 20 20"><path class="f" d="M1 4l4-3 4 4-3 4z"/><path class="f" d="M9 12l4-4 5 5-4 5z"/><path d="M3 10l8-8M8 17l9-9"/></symbol>
<symbol id="keydel" viewBox="0 0 20 20"><path d="M9 2l7 7-7 8-7-8z"/><path class="f" d="M9 5l4 4-4 4z"/><path d="M10 11h9M12 11v8h6v-8"/></symbol>
<symbol id="cam" viewBox="0 0 20 20"><path d="M4 3h14M4 3c0 6-1 9-3 12l5 3h9c0-6 0-9 2-15M14 6h4M14 9h3M14 12h3" stroke-width="1.700"/></symbol>
<symbol id="pedit" viewBox="0 0 20 20"><path class="f" d="M15 1l3 2-9 12-3 1 1-4z"/><path d="M4 18h14M2 14v4"/></symbol>
<symbol id="pbig" viewBox="0 0 20 20"><path class="f" d="M17 0l3 3L7 18l-4 2 1-5z"/></symbol>
<symbol id="eye" viewBox="0 0 20 20"><path d="M0 11c4-8 16-8 20 0M2 11c1 2 2 3 4 4M18 11c-1 2-2 3-4 4"/><circle class="f" cx="10" cy="10" r="4.500"/></symbol>
<symbol id="snd" viewBox="0 0 20 20"><path class="f" d="M1 7h4l6-5v16l-6-5H1z"/><path d="M13 6c2 2 2 6 0 8M16 3c4 4 4 10 0 14"/></symbol>
<symbol id="plus" viewBox="0 0 20 20"><rect x="1" y="1" width="18" height="18" rx="2"/><path d="M10 4v12M4 10h12" stroke-width="2.500"/></symbol>
<symbol id="pic" viewBox="0 0 20 20"><rect x="1.500" y="1.500" width="17" height="17" rx="2"/><path class="f" opacity=".5" d="M2 15l3-3 3 2 3-4 3 2 4-3v9H2z"/></symbol>
<symbol id="afold" viewBox="0 0 20 20"><path d="M14 19H1V4M4 2h15v14H4z"/><path d="M7 6h9v7H7zM7 4h9" stroke-dasharray="2 1"/></symbol>
<symbol id="afolder" viewBox="0 0 20 20"><path d="M2 15V3M5 14V2h13v6M7 5h9v3"/><path class="f" d="M5 12l5-1 2-2h8l-2 8H5z"/></symbol>
<symbol id="page" viewBox="0 0 20 20"><path d="M3 2h13v16H8l-5-5z"/><path class="f" d="M3 13h5v5z"/></symbol>
<symbol id="navi" viewBox="0 0 20 20"><path d="M3 5H1v13h14v-2"/><rect x="4" y="2" width="15" height="13" rx="1"/><path class="f" opacity=".6" d="M7 5h9v7H7z"/></symbol>
<symbol id="cm" viewBox="0 0 20 20"><circle cx="10" cy="10" r="8.500"/><path d="M5 10h10"/></symbol>
<symbol id="cp" viewBox="0 0 20 20"><circle cx="10" cy="10" r="8.500"/><path d="M5 10h10M10 5v10"/></symbol>
<symbol id="cs" viewBox="0 0 20 20"><circle cx="10" cy="10" r="8.500"/><path class="f" d="M6 6h8v8H6z"/></symbol>
<symbol id="fit1" viewBox="0 0 20 20"><path d="M1 1h11v11H1zM8 12v7h11V8h-7M4 4l11 11M4 7V4h3M12 15h3v-3"/></symbol>
<symbol id="fit2" viewBox="0 0 20 20"><path d="M2 2h16v16H2zM5 5l10 10M5 9V5h4M11 15h4v-4"/></symbol>
<symbol id="rl" viewBox="0 0 20 20"><path d="M3 11c-1-10 15-10 15 0 0 4-3 7-7 7"/><path class="f" d="M0 9h7l-4 6z"/></symbol>
<symbol id="rr" viewBox="0 0 20 20"><path d="M17 11C18 1 2 1 2 11c0 4 3 7 7 7"/><path class="f" d="M20 9h-7l4 6z"/></symbol>
<symbol id="fh" viewBox="0 0 20 20"><path d="M10 1v18M1 5l6 5-6 5z"/><path class="f" d="M20 4l-7 6 7 6z"/></symbol>
<symbol id="fv" viewBox="0 0 20 20"><path d="M1 10h18M5 19l5-6 5 6z"/><path class="f" d="M4 1l6 6 6-6z"/></symbol>
<symbol id="lay" viewBox="0 0 20 20"><path d="M2 6l8-5 8 5-8 5zM2 10l8 5 8-5M2 6v8l8 5 8-5V6"/></symbol>
<symbol id="layp" viewBox="0 0 20 20"><path d="M2 5l7-4 7 4-7 4zM2 8l7 4M2 11l7 4M2 5v9l6 4M16 5v4"/><path d="M11 11h2v2h-2zM16 11h2v2h-2zM11 16h2v2h-2zM16 16h2v2h-2z"/></symbol>
<symbol id="circ" viewBox="0 0 20 20"><circle cx="10" cy="10" r="8"/></symbol>
<symbol id="tone" viewBox="0 0 20 20"><circle cx="12" cy="8" r="6.500"/><circle class="f" cx="8" cy="12" r="6" opacity=".8"/></symbol>
<symbol id="dots" viewBox="0 0 20 20"><path d="M2 3h17M2 9h17M2 15h17" stroke-width="3" stroke-dasharray="3 3"/><path d="M5 6h14M5 12h14M5 18h14" stroke-width="3" stroke-dasharray="3 3"/></symbol>
<symbol id="lcol" viewBox="0 0 20 20"><path class="f" d="M1 1h13v14H1z"/><path d="M17 6h2v13H6v-2M1 1h13v14H1z"/></symbol>
<symbol id="rgb" viewBox="0 0 20 20"><circle cx="10" cy="6" r="5.500" fill="#d05555" stroke="none"/><circle cx="6" cy="14" r="5.500" fill="#62c462" stroke="none"/><circle cx="14.500" cy="14" r="5.500" fill="#4e8fd6" stroke="none"/><circle cx="10.500" cy="11.500" r="2" fill="#eee" stroke="none"/></symbol>
<symbol id="clap" viewBox="0 0 20 20"><path d="M2 7h16v12H2zM2 7l2-5h14v5M7 7l2-5M12 7l2-5M6 11v5M10 11v5"/></symbol>
<symbol id="l1" viewBox="0 0 20 20"><path d="M6 1h13v14" stroke-dasharray="2 2"/><path class="f" d="M7 6h8v9H7z"/><path d="M5 4v14h12M1 16h4"/></symbol>
<symbol id="l2" viewBox="0 0 20 20"><path class="f" d="M8 3h4l3 15H5z"/><path d="M1 2l6 3M1 10l6-3M19 2l-6 3M19 10l-6-3"/></symbol>
<symbol id="l3" viewBox="0 0 20 20"><path d="M4 2h10v10l-5 6-5-6z"/><path class="f" d="M4 1h5v11H4z"/></symbol>
<symbol id="l4" viewBox="0 0 20 20"><path class="f" d="M2 1h4v4H2zM10 1h4v4h-4zM6 5h4v4H6zM14 5h4v4h-4zM2 9h4v4H2zM9 11h9v8H9z"/></symbol>
<symbol id="l5" viewBox="0 0 20 20"><path class="f" d="M1 2h17v11h-5a4 4 0 10-6 2H1z"/><path d="M10 12l6 6M16 12l-6 6"/></symbol>
<symbol id="l6" viewBox="0 0 20 20"><path d="M2 18V2h15zM10 12l6 6M16 12l-6 6"/></symbol>
<symbol id="l7" viewBox="0 0 20 20"><path d="M1 1h14v14H1z" fill="#3f8df0" stroke="none"/><path d="M12 10h7v9h-7z" fill="#fff" stroke="none"/></symbol>
<symbol id="list" viewBox="0 0 20 20"><path d="M2 2h16v7H2zM2 11h16v7H2zM6 2v16"/></symbol>
<symbol id="nly" viewBox="0 0 20 20"><path d="M11 17H6l-5-4V2h17v8M1 13h5v4"/><circle cx="15" cy="15" r="4"/><path d="M15 12.500v5M12.500 15h5"/></symbol>
<symbol id="nvy" viewBox="0 0 20 20"><path d="M10 18H2V2h16v8M6 6l4-2 4 2v5l-4 2-4-2z"/><circle cx="15" cy="15" r="4"/><path d="M15 12.500v5M12.500 15h5"/></symbol>
<symbol id="nfd" viewBox="0 0 20 20"><path class="f" d="M0 3h7l2 2h9v4c-5 0-8 3-8 8H0z"/><circle cx="15" cy="15" r="4"/><path d="M15 12.500v5M12.500 15h5"/></symbol>
<symbol id="mrg" viewBox="0 0 20 20"><path d="M8 1h11v11h-4M1 12h8v7H1zM13 5v5H5M8 7l-3 3 3 3"/></symbol>
<symbol id="maskk" viewBox="0 0 20 20"><path class="f" fill-rule="evenodd" d="M1 2h18v16H1zM10 5a5 5 0 100 10 5 5 0 000-10z"/></symbol>
<symbol id="mapp" viewBox="0 0 20 20"><path d="M12 17H1V3h14v4M4 10h6M7 7l-3 3 3 3"/><circle cx="14" cy="13" r="4" stroke-width="2.500"/></symbol>
<symbol id="inf" viewBox="0 0 20 20"><circle cx="10" cy="10" r="8.500"/><path d="M10 8v7M10 4.500v2" stroke-width="2"/></symbol>
<symbol id="ax" viewBox="0 0 20 20"><path d="M2 6v12h16V6" stroke-dasharray="2 1.500"/><path d="M1 2h17M15 0l3 2-3 2"/></symbol>
<symbol id="ay" viewBox="0 0 20 20"><path d="M6 2h12v16H6" stroke-dasharray="2 1.500"/><path d="M2 1v17M0 15l2 3 2-3"/></symbol>
<symbol id="al" viewBox="0 0 20 20"><path d="M2 2h16v16H2z" stroke-dasharray="2 1.500"/><path d="M2 2l16 16M2 6V2h4M14 18h4v-4"/></symbol>
<symbol id="fold" viewBox="0 0 20 20"><path d="M1 17V3h6l2 2h10v12zM1 8h18" fill="#ccc" stroke-width="1"/></symbol>
<symbol id="docs" viewBox="0 0 20 20"><path d="M2 6h8l3 3v9H2z" fill="#ddd"/><path d="M7 6V1h7l4 4v11h-5M13 1v5h5" fill="#bbb"/></symbol>
<symbol id="mus" viewBox="0 0 20 20"><path d="M7 16V3l10-2v13M7 6l10-2" stroke-width="1.700"/><circle class="f" cx="4.500" cy="16.500" r="2.800"/><circle class="f" cx="14.500" cy="14.500" r="2.800"/></symbol>
<symbol id="dl" viewBox="0 0 20 20"><circle class="f" cx="10" cy="10" r="9.500"/><path d="M8 4h4v6h4l-6 6-6-6h4z" fill="#fff" stroke="none"/></symbol>
<symbol id="obs" viewBox="0 0 20 20"><circle cx="10" cy="10" r="8.800"/><path d="M10 10c-4-1-5-5-2-7M10 10c1-4 6-4 7 0M10 10c3 3 0 7-3 7"/><circle cx="5" cy="16" r="4" fill="#e2402f" stroke="none"/></symbol>
<symbol id="cal" viewBox="0 0 20 20"><path d="M2 1h16v18H2z" fill="#fff" stroke="none"/><path d="M2 1h16v5H2z" fill="#e4572e" stroke="none"/><path d="M8 9h4l-2 3c3 0 2 4-2 3" stroke="#555"/></symbol>
<symbol id="stk" viewBox="0 0 20 20"><path class="f" d="M3 2h6v4H3zM11 2h6v4h-6zM2 7h7v4H2zM11 7h7v4h-7zM0 12h20v6H0z"/></symbol>
<symbol id="shd" viewBox="0 0 20 20"><path class="f" d="M10 0l8 3c0 8-2 13-8 17C4 16 2 11 2 3z"/><path d="M6 9l3 3 5-6" stroke="#233" stroke-width="2"/></symbol>
<symbol id="mon" viewBox="0 0 20 20"><path class="f" d="M1 2h14l4 2-2 4 2 7H1zM7 15h6l2 4H5z"/></symbol>
<symbol id="fad" viewBox="0 0 20 20"><path d="M6 1v18M14 1v18" stroke-width="6" stroke-dasharray="2 1.500"/></symbol>
<symbol id="half" viewBox="0 0 20 20"><circle cx="10" cy="10" r="8.500" stroke-width="2"/><path class="f" d="M2 11h16c0 11-16 11-16 0z"/></symbol>
<symbol id="bt" viewBox="0 0 20 20"><path d="M5 5l10 10-5 4V1l5 4L5 15"/></symbol>
<symbol id="wifi" viewBox="0 0 20 20"><path d="M1 7c5-5 13-5 18 0l-9 11z" stroke-width="1.600"/></symbol>
<symbol id="bat" viewBox="0 0 26 20"><rect x="1" y="4" width="21" height="12" rx="2"/><path class="f" d="M3 6h9l-4 5h2l-3 3H3zM14 6h6v8h-8l3-4h-3zM23 8h2v4h-2z"/></symbol>
<symbol id="clk" viewBox="0 0 20 20"><circle cx="10" cy="10" r="8.500"/><path d="M6 13l4-3 5-2" stroke-width="1.600"/></symbol>
<symbol id="ctl" viewBox="0 0 20 20"><path d="M1 4h2M5 4h14M1 10h2M5 10h14M1 16h2M5 16h14" stroke-width="2.200"/></symbol>
</defs></svg>

<div class="desk d-flex flex-column position-relative">
 <div class="turf position-absolute"></div>
 <header class="menus d-flex align-items-center">
  <nav class="d-flex align-items-center flex-grow-1">
   <button class="btn ib ms-3" aria-label="Apple"><svg class="i"><use href="#apple"/></svg></button>
   <ul class="list-unstyled d-flex mb-0 menu-items">
    <li class="ms-1"><a href="#" class="fw-bold">CLIP STUDIO PAINT</a></li><li><a href="#">File</a></li><li><a href="#">Edit</a></li><li><a href="#">Story</a></li><li><a href="#">Animation</a></li><li><a href="#">Layer</a></li><li><a href="#">Select</a></li><li><a href="#">View</a></li><li><a href="#">Filter</a></li><li><a href="#">Window</a></li><li><a href="#">Help</a></li>
   </ul>
  </nav>
  <div class="status-items d-flex align-items-center">
   <svg class="i"><use href="#obs"/></svg><svg class="i"><use href="#cal"/></svg><svg class="i"><use href="#stk"/></svg><svg class="i"><use href="#shd"/></svg><svg class="i"><use href="#mon"/></svg><svg class="i off"><use href="#fad"/></svg><b class="fst-italic dd">d</b><span class="d-flex gap-1"><svg class="i"><use href="#half"/></svg>45.36 %</span><svg class="i off"><use href="#bt"/></svg><svg class="i"><use href="#wifi"/></svg><svg class="i off"><use href="#snd"/></svg><span class="d-flex gap-1">100%<svg class="i batt"><use href="#bat"/></svg></span><svg class="i ms-2"><use href="#clk"/></svg><svg class="i ms-2"><use href="#mag"/></svg><svg class="i"><use href="#ctl"/></svg>
  </div>
 </header>

 <main class="d-flex flex-grow-1 position-relative">
  <!-- left dock -->
  <aside class="dock ldock d-flex flex-column flex-shrink-0">
   <div class="strip d-flex align-items-center"><svg class="i xs ms-1"><use href="#ltt"/></svg><svg class="i xs ms-3"><use href="#grip"/></svg><svg class="i xs ms-1"><use href="#ltt"/></svg><svg class="i xs ms-3"><use href="#lt"/></svg><svg class="i xs ms-auto me-2"><use href="#grip"/></svg></div>
   <div class="d-flex flex-grow-1">
    <div class="tools d-flex flex-column flex-shrink-0">
     <div class="tabs d-flex"><button class="btn ib burger" aria-label="Tool menu"><svg class="i xs"><use href="#burger"/></svg></button><button class="ptab px-1 flex-grow-1" aria-label="Tool"><svg class="i s"><use href="#pbig"/></svg></button></div>
     <button class="btn ib" aria-label="Zoom"><svg class="i"><use href="#mag"/></svg></button>
     <button class="btn ib" aria-label="Hand"><svg class="i"><use href="#hand"/></svg></button>
     <button class="btn ib on" aria-label="Operation"><svg class="i"><use href="#cube"/></svg></button>
     <button class="btn ib" aria-label="Move layer"><svg class="i"><use href="#move"/></svg></button>
     <button class="btn ib" aria-label="Story"><svg class="i"><use href="#mvl"/></svg></button>
     <button class="btn ib" aria-label="Lasso"><svg class="i"><use href="#lasso"/></svg></button>
     <button class="btn ib" aria-label="Auto select"><svg class="i"><use href="#wand"/></svg></button>
     <button class="btn ib" aria-label="Eyedropper"><svg class="i"><use href="#drop"/></svg></button>
     <hr>
     <button class="btn ib" aria-label="Custom"><svg class="i"><use href="#red"/></svg></button>
     <button class="btn ib" aria-label="Airbrush"><svg class="i"><use href="#air"/></svg></button>
     <button class="btn ib" aria-label="Pen"><svg class="i"><use href="#pen"/></svg></button>
     <button class="btn ib" aria-label="Pen"><svg class="i"><use href="#pen"/></svg></button>
     <button class="btn ib" aria-label="Airbrush"><svg class="i"><use href="#air"/></svg></button>
     <hr>
     <button class="btn ib" aria-label="Pen"><svg class="i"><use href="#pen"/></svg></button>
     <button class="btn ib" aria-label="Brush"><svg class="i"><use href="#brush"/></svg></button>
     <button class="btn ib" aria-label="Pencil"><svg class="i"><use href="#pencil"/></svg></button>
     <button class="btn ib" aria-label="Airbrush"><svg class="i"><use href="#air"/></svg></button>
     <button class="btn ib" aria-label="Decoration"><svg class="i"><use href="#bow"/></svg></button>
     <button class="btn ib" aria-label="Eraser"><svg class="i"><use href="#eraser"/></svg></button>
     <button class="btn ib" aria-label="Blend"><svg class="i"><use href="#blend"/></svg></button>
     <hr>
     <button class="btn ib" aria-label="Fill"><svg class="i"><use href="#bucket"/></svg></button>
     <button class="btn ib" aria-label="Gradient"><svg class="i"><use href="#grad"/></svg></button>
     <button class="btn ib" aria-label="Figure"><svg class="i"><use href="#rect"/></svg></button>
     <button class="btn ib" aria-label="Text"><svg class="i"><use href="#txt"/></svg></button>
     <button class="btn ib" aria-label="Balloon"><svg class="i"><use href="#balloon"/></svg></button>
     <div class="swatch toolsw"><i class="fg"></i><i class="bgc"></i><i class="tr"></i></div>
    </div>
    <div class="d-flex flex-column lpanels">
     <div class="tabs d-flex"><button class="btn ib burger" aria-label="Panel menu"><svg class="i xs"><use href="#burger"/></svg></button><button class="ptab"><svg class="i"><use href="#penlist"/></svg>Sub Tool [Operation]</button></div>
     <div class="group d-flex"><button class="d-flex align-items-center"><svg class="i"><use href="#cube"/></svg>Operation</button></div>
     <div class="d-flex well">
      <div class="flex-grow-1 d-flex flex-column sublist">
       <button class="sub on d-flex justify-content-between"><svg class="i"><use href="#cube"/></svg><span class="lbl align-self-end">Object</span></button>
       <button class="sub d-flex justify-content-between"><svg class="i"><use href="#laysel"/></svg><span class="lbl align-self-end">Layer selection</span></button>
       <button class="sub d-flex justify-content-between"><svg class="i"><use href="#bulb"/></svg><span class="lbl align-self-end">Light table</span></button>
       <button class="sub d-flex justify-content-between"><svg class="i"><use href="#edtl"/></svg><span class="lbl align-self-end">Edit timeline</span></button>
      </div><div class="gutter"></div>
     </div>
     <div class="foot d-flex justify-content-end align-items-center"><button class="btn ib" aria-label="Import"><svg class="i s"><use href="#imp"/></svg></button><button class="btn ib" aria-label="Duplicate"><svg class="i s"><use href="#dup"/></svg></button><button class="btn ib" aria-label="Delete"><svg class="i s"><use href="#trash"/></svg></button></div>
     <div class="tabs d-flex"><button class="btn ib burger" aria-label="Panel menu"><svg class="i xs"><use href="#burger"/></svg></button><button class="ptab"><svg class="i"><use href="#pengear"/></svg>Tool property [Object]</button></div>
     <div class="prophead d-flex flex-column justify-content-between"><span>Object</span><button class="btn ib align-self-end" aria-label="Lock"><svg class="i s"><use href="#lock"/></svg></button></div>
     <div class="d-flex flex-grow-1 well">
      <div class="flex-grow-1 propset">
       <div class="dropwrap"><select class="drop" aria-label="Operation of transparent part"><option>Operation of transparent part</option></select><svg class="i xs"><use href="#dn"/></svg></div>
       <hr class="rule">
       <div class="dropwrap"><select class="drop" aria-label="Selectable object"><option>Selectable object</option></select><svg class="i xs"><use href="#dn"/></svg></div>
      </div><div class="gutter"></div>
     </div>
     <div class="foot d-flex justify-content-end align-items-center"><button class="btn ib" aria-label="Reset"><svg class="i s"><use href="#rst"/></svg></button><button class="btn ib" aria-label="Sub tool detail"><svg class="i s"><use href="#wrench"/></svg></button></div>
     <div class="tabs d-flex"><button class="btn ib burger" aria-label="Panel menu"><svg class="i xs"><use href="#burger"/></svg></button><button class="ptab"><svg class="i"><use href="#pendisc"/></svg>Brush Size</button></div>
     <div class="sizes d-flex flex-shrink-0">
      <div class="sizegrid flex-grow-1" id="sizes"></div>
      <div class="gutter d-flex flex-column"><button class="btn ib sbtn" aria-label="Up"><svg class="i xs"><use href="#up"/></svg></button><div class="thumb sthumb"></div><button class="btn ib sbtn mt-auto" aria-label="Down"><svg class="i xs"><use href="#dn"/></svg></button></div>
     </div>
     <div class="tabs d-flex"><button class="btn ib burger" aria-label="Panel menu"><svg class="i xs"><use href="#burger"/></svg></button><button class="ptab cwt"><svg class="i s"><use href="#cring"/></svg>Color Whee</button><button class="ptab idle" aria-label="Palette"><svg class="i s"><use href="#pal"/></svg></button><button class="ptab idle" aria-label="Mixing"><svg class="i s"><use href="#node"/></svg></button><button class="ptab idle" aria-label="History"><svg class="i s"><use href="#wins"/></svg></button><button class="ptab idle flex-grow-1" aria-label="Film"><svg class="i s"><use href="#film"/></svg></button></div>
     <div class="colorbody flex-shrink-0 d-flex flex-column position-relative">
      <div class="wheel d-flex align-items-center justify-content-center mx-auto"><div class="core d-flex align-items-center justify-content-center"><div class="sq"></div></div></div>
      <svg class="knobs position-absolute" width="223" height="140" fill="none"><circle cx="80" cy="37" r="4.500" stroke="#eee" stroke-width="1.500"/><rect x="133" y="108" width="7" height="9" transform="rotate(-28 136 112)" stroke="#fff" stroke-width="2" fill="#1b60d8"/></svg>
      <div class="hsv d-flex align-items-center justify-content-end"><b>H</b><span>213</span><b>S</b><span class="n0">0</span><b>V</b><span>91</span><button class="btn ib" aria-label="Switch"><svg class="i s"><use href="#play"/></svg></button></div>
      <div class="swatch position-absolute cwsw"><i class="fg"></i><i class="bgc"></i><i class="tr"></i></div>
     </div>
    </div>
   </div>
  </aside>

  <!-- centre column -->
  <div class="mid d-flex flex-column flex-grow-1 position-relative">
   <div class="bar d-flex align-items-center">
    <button class="btn ib" aria-label="Clip Studio"><svg class="i"><use href="#csp"/></svg></button><span class="sep"></span>
    <button class="btn ib" aria-label="New"><svg class="i"><use href="#new"/></svg></button><button class="btn ib" aria-label="Open"><svg class="i"><use href="#open"/></svg></button><button class="btn ib" aria-label="Save"><svg class="i"><use href="#save"/></svg></button><span class="sep"></span>
    <button class="btn ib" aria-label="Undo"><svg class="i"><use href="#undo"/></svg></button><button class="btn ib off" aria-label="Redo"><svg class="i"><use href="#redo"/></svg></button><span class="sep"></span>
    <button class="btn ib" aria-label="Clear"><svg class="i"><use href="#burst"/></svg></button><button class="btn ib off" aria-label="Clear outside"><svg class="i"><use href="#dsel"/></svg></button><button class="btn ib" aria-label="Fill"><svg class="i"><use href="#bucket"/></svg></button><button class="btn ib" aria-label="Transform"><svg class="i"><use href="#trans"/></svg></button><span class="sep"></span>
    <button class="btn ib off" aria-label="Deselect"><svg class="i"><use href="#ds1"/></svg></button><button class="btn ib off" aria-label="Invert"><svg class="i"><use href="#ds2"/></svg></button><button class="btn ib off" aria-label="Border"><svg class="i"><use href="#ds3"/></svg></button><span class="sep"></span>
    <button class="btn ib on" aria-label="Snap ruler"><svg class="i"><use href="#sn1"/></svg></button><button class="btn ib on" aria-label="Snap special ruler"><svg class="i"><use href="#sn2"/></svg></button><button class="btn ib" aria-label="Snap grid"><svg class="i"><use href="#sn3"/></svg></button><span class="sep"></span>
    <button class="btn ib" aria-label="Help"><svg class="i"><use href="#help"/></svg></button>
    <div class="floatwin ms-auto d-flex align-items-center"><button class="btn ib burger off" aria-label="Menu"><svg class="i xs"><use href="#burger"/></svg></button><button class="btn ib wbtn" aria-label="Close"><svg class="i wi"><use href="#x"/></svg></button><button class="btn ib wbtn" aria-label="Minimize"><svg class="i wi"><use href="#min"/></svg></button><span class="flex-grow-1 text-center fwt">Color Slider</span></div>
   </div>
   <section class="docwin d-flex flex-column flex-grow-1">
    <div class="title d-flex align-items-center"><button class="btn ib wb2" aria-label="Close"><svg class="i wi"><use href="#x"/></svg></button><button class="btn ib wb2" aria-label="Minimize"><svg class="i wi"><use href="#min"/></svg></button><button class="btn ib wb2" aria-label="Maximize"><svg class="i wi"><use href="#sqr"/></svg></button><span class="flex-grow-1 text-center doctitle">Animation* (2500 x 1406px With blank space:3300 x 2206px 250dpi 36.1%)&nbsp; You can use all features for another 29 days. - CLIP STUDIO PAINT EX</span></div>
    <div class="d-flex justify-content-between doctabs"><button class="doctab"><span class="dot">●</span> Animation*</button><button class="btn ib wb2" aria-label="Tabs"><svg class="i xs"><use href="#dn"/></svg></button></div>
    <div class="d-flex flex-grow-1 docmain">
     <div class="stage flex-grow-1 d-flex"><div class="paper flex-grow-1 d-flex flex-column"><div class="frameline flex-grow-1"></div><div class="note">3 story</div></div></div>
     <div class="gutter d-flex flex-column"><button class="btn ib sbtn" aria-label="Up"><svg class="i xs"><use href="#up"/></svg></button><div class="thumb vth"></div><button class="btn ib sbtn mt-auto" aria-label="Down"><svg class="i xs"><use href="#dn"/></svg></button></div>
    </div>
    <div class="docfoot d-flex align-items-center">
     <label class="gauge low g97"><span>36.1</span><input type="range" value="47" aria-label="Zoom"></label>
     <button class="btn ib" aria-label="Zoom out"><svg class="i xs"><path d="M1 6h9"/></svg></button><button class="btn ib" aria-label="Zoom in"><svg class="i xs"><path d="M1 6h9M5.500 1v9"/></svg></button><button class="btn ib" aria-label="Fit"><svg class="i xs"><path class="f" d="M2 2h7v7H2z"/></svg></button>
     <label class="gauge low hill g97"><span class="ps-1">0.0</span><input type="range" value="50" aria-label="Rotate"></label>
     <button class="btn ib" aria-label="Rotate left"><svg class="i xs"><use href="#rl"/></svg></button><button class="btn ib" aria-label="Rotate right"><svg class="i xs"><use href="#rr"/></svg></button><button class="btn ib" aria-label="Reset rotation"><svg class="i xs"><use href="#rst"/></svg></button>
     <button class="btn ib sbtn" aria-label="Left"><svg class="i xs"><use href="#lt"/></svg></button><div class="flex-grow-1 hsb d-flex"><div class="thumb dth"></div></div><button class="btn ib sbtn" aria-label="Right"><svg class="i xs"><use href="#rt"/></svg></button>
    </div>
   </section>
   <div class="edgeline"></div>
   <section class="tlwin d-flex flex-column">
    <div class="tltitle d-flex align-items-center"><button class="btn ib burger off" aria-label="Menu"><svg class="i xs"><use href="#burger"/></svg></button><button class="btn ib wbtn" aria-label="Close"><svg class="i wi"><use href="#x"/></svg></button><button class="btn ib wbtn" aria-label="Minimize"><svg class="i wi"><use href="#min"/></svg></button><span class="flex-grow-1 text-center tlt">Timeline</span></div>
    <div class="tlbar d-flex align-items-center">
     <button class="btn ib off" aria-label="Graph"><svg class="i s"><use href="#wave"/></svg></button><i></i>
     <button class="btn ib" aria-label="Timeline"><svg class="i s"><use href="#tl1"/></svg></button><button class="btn ib" aria-label="New timeline"><svg class="i"><use href="#tl2"/></svg></button><i></i>
     <button class="btn ib" aria-label="Zoom out"><svg class="i s"><use href="#zo"/></svg></button><button class="btn ib" aria-label="Zoom in"><svg class="i s"><use href="#zi"/></svg></button><i></i>
     <button class="btn ib" aria-label="First"><svg class="i s"><use href="#p1"/></svg></button><button class="btn ib" aria-label="Previous"><svg class="i s"><use href="#p2"/></svg></button><button class="btn ib" aria-label="Play"><svg class="i s"><use href="#p3"/></svg></button><button class="btn ib" aria-label="Next"><svg class="i s"><use href="#p4"/></svg></button><button class="btn ib" aria-label="Last"><svg class="i s"><use href="#p5"/></svg></button><i></i>
     <button class="btn ib" aria-label="Loop"><svg class="i"><use href="#loop"/></svg></button><i></i>
     <button class="btn ib" aria-label="New folder"><svg class="i"><use href="#cel"/></svg></button><button class="btn ib off" aria-label="New cel"><svg class="i"><use href="#cel2"/></svg></button><button class="btn ib off" aria-label="Specify cels"><svg class="i"><use href="#cel3"/></svg></button><button class="btn ib off" aria-label="Delete cels"><svg class="i"><use href="#cel3"/></svg></button><i></i>
     <button class="btn ib" aria-label="Onion skin"><svg class="i s"><use href="#onion"/></svg></button><i></i>
     <button class="btn ib off" aria-label="Keyframe"><svg class="i s"><use href="#key"/></svg></button><button class="btn ib nw" aria-label="Key type"><svg class="i s"><use href="#ud"/></svg></button><button class="btn ib off" aria-label="Delete key"><svg class="i s"><use href="#keydel"/></svg></button><button class="btn ib" aria-label="Camera"><svg class="i s"><use href="#cam"/></svg></button><button class="btn ib off" aria-label="Edit"><svg class="i s"><use href="#pedit"/></svg></button>
     <div class="counts ms-auto d-flex"><span>16</span><span>/</span><span>1</span><span>/</span><span>120</span></div>
    </div>
    <div class="d-flex flex-grow-1 tlmain">
     <div class="tlleft flex-shrink-0">
      <div class="dropwrap cut"><select class="drop" aria-label="Timeline name"><option>C-001-0001</option></select><svg class="i"><use href="#ud"/></svg></div>
      <div class="trk d-flex first"><div class="eye d-flex align-items-center justify-content-center"><svg class="i s"><use href="#eye"/></svg></div><div class="nm d-flex align-items-center flex-grow-1"><svg class="i s"><use href="#snd"/></svg><svg class="i xs"><use href="#plus"/></svg><span class="sm">thunder1 : Volume</span></div></div>
      <div class="trk d-flex on"><div class="eye d-flex align-items-center justify-content-center"><svg class="i s"><use href="#eye"/></svg></div><div class="nm d-flex align-items-center flex-grow-1"><svg class="i s"><use href="#pic"/></svg><svg class="i xs"><use href="#plus"/></svg><span>Layer 1 :</span></div></div>
      <div class="trk d-flex"><div class="eye d-flex align-items-center justify-content-center"><svg class="i s"><use href="#eye"/></svg></div><div class="nm d-flex align-items-center flex-grow-1"><svg class="i s"><use href="#afold"/></svg><svg class="i xs"><use href="#plus"/></svg><span class="sm fadeout">Animation folder : 1</span></div></div>
      <div class="trk d-flex lastt"><div class="eye d-flex align-items-center justify-content-center"><svg class="i s"><use href="#eye"/></svg></div><div class="nm d-flex align-items-center flex-grow-1"><svg class="i s"><use href="#page"/></svg><svg class="i xs"><use href="#plus"/></svg><span>Paper :</span></div></div>
     </div>
     <div class="flex-grow-1 d-flex flex-column tlright">
      <div class="ruler">
       <div class="sec d-flex"><span>0<em class="pos16">16</em></span><span>1<em class="pos34">34</em></span><span>2</span></div>
       <div class="fr d-flex" id="frames"></div>
      </div>
      <div class="lanes flex-grow-1">
       <div class="lane"><div class="clip"><svg id="wavef" preserveAspectRatio="none" viewBox="0 0 1057 18"><polygon fill="#423f90"/></svg><span class="tag">thunder1</span></div></div>
       <div class="lane"><div class="clip"></div></div>
       <div class="lane"><div class="clip"><span class="one position-absolute">1</span></div></div>
       <div class="lane"><div class="clip"></div></div>
      </div>
      <div class="hsb d-flex align-items-center"><button class="btn ib sbtn" aria-label="Left"><svg class="i xs"><use href="#lt"/></svg></button><div class="thumb tth"></div><button class="btn ib sbtn ms-auto tlr" aria-label="Right"><svg class="i xs"><use href="#rt"/></svg></button></div>
     </div>
    </div>
   </section>
  </div>

  <!-- right dock -->
  <aside class="dock rdock d-flex flex-column flex-shrink-0">
   <div class="strip d-flex align-items-center rstrip"><svg class="i xs"><use href="#ltt"/></svg><svg class="i xs ms-1"><use href="#grip"/></svg><svg class="i xs ms-auto me-3"><use href="#rt"/></svg><svg class="i xs me-1"><use href="#rtt"/></svg></div>
   <div class="tabs d-flex"><button class="btn ib burger" aria-label="Panel menu"><svg class="i xs"><use href="#burger"/></svg></button><button class="ptab"><svg class="i s"><use href="#navi"/></svg>Navigator</button></div>
   <div class="nav position-relative d-block"><div class="pg h-100"></div><div class="view position-absolute"></div></div>
   <div class="navctl">
    <div class="d-flex align-items-center"><label class="gauge"><span>36.1</span><input type="range" value="45" aria-label="Zoom"></label><button class="btn ib" aria-label="Zoom out"><svg class="i s"><use href="#cm"/></svg></button><button class="btn ib" aria-label="Zoom in"><svg class="i s"><use href="#cp"/></svg></button><button class="btn ib" aria-label="100%"><svg class="i s"><use href="#cs"/></svg></button><span class="sep"></span><button class="btn ib" aria-label="Fit"><svg class="i s"><use href="#fit1"/></svg></button><button class="btn ib" aria-label="Full"><svg class="i s"><use href="#fit2"/></svg></button></div>
    <div class="d-flex align-items-center"><label class="gauge hill"><span class="ps-1">0.0</span><input type="range" value="50" aria-label="Rotate"></label><button class="btn ib" aria-label="Rotate left"><svg class="i s"><use href="#rl"/></svg></button><button class="btn ib" aria-label="Rotate right"><svg class="i s"><use href="#rr"/></svg></button><button class="btn ib" aria-label="Reset"><svg class="i s"><use href="#rst"/></svg></button><span class="sep"></span><button class="btn ib" aria-label="Flip horizontal"><svg class="i s"><use href="#fh"/></svg></button><button class="btn ib" aria-label="Flip vertical"><svg class="i s"><use href="#fv"/></svg></button></div>
   </div>
   <div class="tabs d-flex"><button class="btn ib burger" aria-label="Panel menu"><svg class="i xs"><use href="#burger"/></svg></button><button class="ptab"><svg class="i"><use href="#layp"/></svg>Layer Property</button><button class="ptab idle" aria-label="Search layer"><svg class="i s"><use href="#lay"/></svg></button></div>
   <div class="lprop d-flex well"><div class="flex-grow-1">
     <div class="legend">Effect</div>
     <div class="boxed fx d-flex align-items-center justify-content-between ms-auto"><button class="btn ib" aria-label="Border"><svg class="i s"><use href="#circ"/></svg></button><button class="btn ib" aria-label="Extract line"><svg class="i s"><use href="#tone"/></svg></button><button class="btn ib" aria-label="Tone"><svg class="i s"><use href="#dots"/></svg></button><button class="btn ib" aria-label="Layer color"><svg class="i s"><use href="#lcol"/></svg></button><button class="btn ib nw" aria-label="More"><svg class="i s"><use href="#ud"/></svg></button></div>
     <div class="legend">Expression color</div>
     <div class="dropwrap exprs"><select class="drop" aria-label="Expression color"><option>Color</option></select><svg class="i s rgbi"><use href="#rgb"/></svg><svg class="i s"><use href="#ud"/></svg></div>
    </div><div class="gutter"></div></div>
   <div class="tabs d-flex ltabs"><button class="btn ib burger" aria-label="Panel menu"><svg class="i xs"><use href="#burger"/></svg></button><button class="ptab"><svg class="i s"><use href="#lay"/></svg>Layer</button><button class="ptab idle"><svg class="i s"><use href="#clap"/></svg>Auto Action</button></div>
   <div class="layctl">
    <div class="d-flex align-items-center lc1"><button class="btn ib boxed b1" aria-label="Palette color"><svg class="i s" viewBox="0 0 20 20"><rect x="0" y="2" width="20" height="16" rx="1"/></svg><svg class="i s"><use href="#ud"/></svg></button><div class="dropwrap blend"><select class="drop" aria-label="Blending mode"><option>Normal</option></select><svg class="i s"><use href="#ud"/></svg></div><input type="range" class="opac" value="100" aria-label="Opacity"><span class="hund">100</span><svg class="i s"><use href="#ud"/></svg></div>
    <div class="d-flex align-items-center lc2"><button class="btn ib" aria-label="Clip"><svg class="i s"><use href="#l1"/></svg></button><button class="btn ib" aria-label="Reference"><svg class="i s"><use href="#l2"/></svg></button><button class="btn ib" aria-label="Draft"><svg class="i s"><use href="#l3"/></svg></button><button class="btn ib" aria-label="Lock"><svg class="i s"><use href="#lockc"/></svg></button><button class="btn ib" aria-label="Lock transparent"><svg class="i s"><use href="#l4"/></svg></button><button class="btn ib wd off" aria-label="Mask"><svg class="i s"><use href="#l5"/></svg><svg class="i xs"><use href="#ud"/></svg></button><button class="btn ib wd off" aria-label="Ruler"><svg class="i s"><use href="#l6"/></svg><svg class="i xs"><use href="#ud"/></svg></button><button class="btn ib wd boxed" aria-label="Layer color"><svg class="i s"><use href="#l7"/></svg><svg class="i xs"><use href="#ud"/></svg></button></div>
   </div>
   <div class="d-flex flex-grow-1 well"><div class="flex-grow-1">
     <div class="lrow d-flex"><div class="c"><svg class="i s"><use href="#eye"/></svg></div><div class="c"><span class="box"></span></div><div class="body d-flex flex-grow-1 align-items-center"><svg class="i s ms-2"><use href="#snd"/></svg><span class="tname align-self-end">thunder1</span><svg class="i ms-auto me-1"><use href="#penlock"/></svg></div></div>
     <div class="lrow on d-flex"><div class="c"><svg class="i s"><use href="#eye"/></svg></div><div class="c"><svg class="i s"><use href="#pedit"/></svg></div><div class="body d-flex flex-grow-1 align-items-center"><div class="checker t1"></div><div class="tx">100 % Normal<br>Layer 1</div></div></div>
     <div class="lrow d-flex"><div class="c"><svg class="i s"><use href="#eye"/></svg></div><div class="c"><span class="box"></span></div><div class="body d-flex flex-grow-1 align-items-center"><svg class="i xs dnn"><use href="#dn"/></svg><svg class="i"><use href="#afolder"/></svg><div class="tx">100 % Normal<br>Animation folder : 1</div></div></div>
     <div class="lrow d-flex"><div class="c"><svg class="i s"><use href="#eye"/></svg></div><div class="c"><span class="box"></span></div><div class="body d-flex flex-grow-1 align-items-center"><div class="checker t2"></div><div class="tx">100 % Normal<br>1</div></div></div>
     <div class="lrow d-flex"><div class="c"><svg class="i s"><use href="#eye"/></svg></div><div class="c"><span class="box"></span></div><div class="body d-flex flex-grow-1 align-items-center"><div class="checker t1 plain"></div><div class="pgico"><svg class="i s"><use href="#page"/></svg></div><span class="align-self-end ms-1">Paper</span></div></div>
    </div><div class="gutter"></div></div>
   <div class="foot d-flex align-items-center"><button class="btn ib me-auto" aria-label="Two-pane"><svg class="i s"><use href="#list"/></svg></button><button class="btn ib" aria-label="New raster layer"><svg class="i"><use href="#nly"/></svg></button><button class="btn ib" aria-label="New vector layer"><svg class="i"><use href="#nvy"/></svg></button><button class="btn ib" aria-label="New folder"><svg class="i"><use href="#nfd"/></svg></button><button class="btn ib off" aria-label="Transfer"><svg class="i"><use href="#mrg"/></svg></button><button class="btn ib off" aria-label="Merge"><svg class="i"><use href="#mrg"/></svg></button><button class="btn ib" aria-label="Mask"><svg class="i s"><use href="#maskk"/></svg></button><button class="btn ib off" aria-label="Apply mask"><svg class="i"><use href="#mapp"/></svg></button><button class="btn ib" aria-label="Delete"><svg class="i s"><use href="#trash"/></svg></button></div>
   <div class="tabs d-flex itabs"><button class="btn ib burger" aria-label="Panel menu"><svg class="i xs"><use href="#burger"/></svg></button><button class="ptab"><svg class="i s"><use href="#inf"/></svg>Information</button></div>
   <div class="info">
    <div class="sysline"><span>System:</span><span>38%</span><span>Application:</span><span>4%</span></div>
    <hr class="rule">
    <div class="coords"><span><svg class="i s"><use href="#ax"/></svg>X</span><span><svg class="i s"><use href="#ax"/></svg>H:</span><span><svg class="i s"><use href="#ay"/></svg>Y:</span><span><svg class="i s"><use href="#ay"/></svg>V:</span><span></span><span><svg class="i s"><use href="#al"/></svg>L:</span></div>
   </div>
  </aside>
 </main>

 <nav class="finder position-absolute" aria-label="Finder"><a href="#" class="d-flex align-items-center"><svg class="i"><use href="#docs"/></svg>Documents</a><a href="#" class="d-flex align-items-center"><svg class="i"><use href="#mus"/></svg>Music</a><a href="#" class="d-flex align-items-center"><svg class="i"><use href="#dl"/></svg>Downloads</a><a href="#" class="d-flex align-items-center"><svg class="i"><use href="#fold"/></svg>Best Help</a><a href="#" class="d-flex align-items-center"><svg class="i"><use href="#fold"/></svg>Works</a><a href="#" class="d-flex align-items-center"><svg class="i"><use href="#fold"/></svg>Inspiration</a></nav>

 <div class="callbox m1 position-absolute"></div>
 <div class="callbox m2 position-absolute"></div>
 <svg class="arr position-absolute" viewBox="0 0 176 38"><path d="M0 25L144 13 141 0l35 17-34 19 3-12L2 28z" fill="#10e010"/></svg>
 <span class="num n1 position-absolute">1</span><span class="num n2 position-absolute">2</span>
 <svg class="cursor position-absolute" viewBox="0 0 13 20"><path d="M1 1v15l3.500-3L7 19l3-1.300L7.500 12H12z" fill="#111" stroke="#fff" stroke-width="1.200"/></svg>
</div>

<script src="https://cdn.jsdelivr.net/npm/bootstrap@5.3.0/dist/js/bootstrap.bundle.min.js"></script>
<script>
// brush presets: label and preview diameter
const presets=[['0.7',1],['1',1],['1.5',1],['2',1],['2.5',2],['3',2],['4',3],['5',4],['6',5],['7',6],['8',7],['10',9],['12',11],['15',14],['17',16],['20',19],['25',24],['30',24],['',14],['',14],['',14],['',14],['',14],['',14]];
document.getElementById('sizes').innerHTML=presets.map(p=>`<button type="button" aria-label="Size ${p[0]}"><u><i style="width:${p[1]}px;height:${p[1]}px"></i></u><b>${p[0]}</b></button>`).join('');
// frame labels, one for every five frames
document.getElementById('frames').innerHTML=[-10,-5,1,6,11,16,21,26,31,36,41,46,51,56,61,66,71].map(n=>`<span class="${n<0?'neg':n==16?'cur':''}">${n}</span>`).join('');
// audio waveform
let seed=7,pts='0,18 ';
const rnd=()=>(seed=(seed*16807)%2147483647)/2147483647;
const env=[14,17,17,15,12,16,11,13,17,15,12,16,17,12,17,17,10,16,17,15,11,12,10,15,13,15,14,7,6,8];
for(let x=0;x<=1057;x++){const h=x<690?0.6:x<722?1+(x-690)/12*rnd():x<762?3+rnd()*8*(x%17<9?1:.5):env[Math.floor((x-762)/10)%30]*(.65+.4*rnd());pts+=`${x},${(18-Math.min(h,17.5)).toFixed(1)} `}
document.querySelector('#wavef polygon').setAttribute('points',pts+'1057,18');
</script>
</body>
</html>
